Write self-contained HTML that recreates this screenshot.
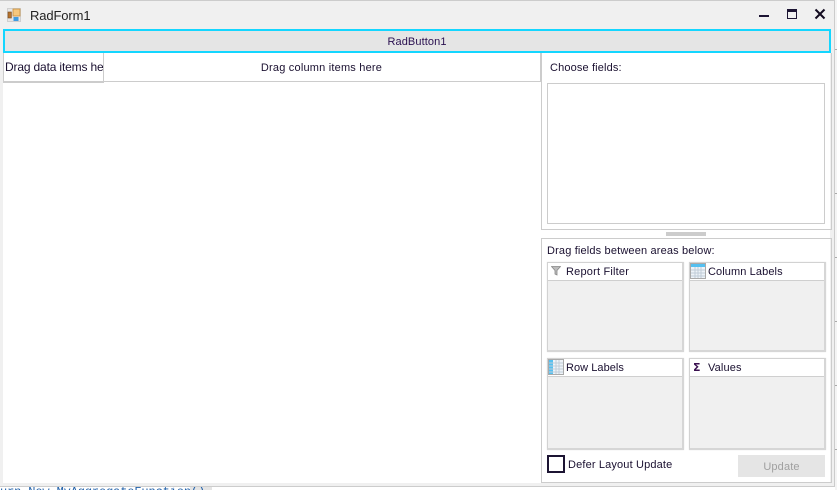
<!DOCTYPE html>
<html><head><meta charset="utf-8"><style>
html,body{margin:0;padding:0;width:837px;height:490px;overflow:hidden;background:#fff}
body{position:relative;font-family:"Liberation Sans",sans-serif;font-size:12px;color:#1a1030}
.a{position:absolute;box-sizing:border-box}
.t{position:absolute;white-space:nowrap;line-height:14px;letter-spacing:.14px}
.g{position:absolute;box-sizing:border-box;width:137px;background:#f0f0f0;border:1px solid #d2d2d2;border-right:2px solid #d6d6d6;border-bottom:2px solid #d6d6d6;box-shadow:0 0 1px #e0e0e0}
.g .h{position:absolute;left:0;top:0;right:0;height:17px;background:#fff;border-bottom:1px solid #cfcfcf}
</style></head><body>
<div class="a" style="left:0;top:0;width:835px;height:487px;background:#f0f0f0;border-top:1px solid #ccc;border-right:1px solid #ccc;border-bottom:1px solid #ccc"></div>
<div class="a" style="left:3px;top:53px;width:827px;height:430px;background:#fff"></div>
<div class="a" style="left:835px;top:0;width:2px;height:490px;background:#f4f4f4"></div>
<div class="a" style="left:835px;top:49px;width:2px;height:1px;background:#aaa"></div>
<div class="a" style="left:835px;top:193px;width:2px;height:1px;background:#aaa"></div>
<div class="a" style="left:835px;top:257px;width:2px;height:1px;background:#aaa"></div>
<div class="a" style="left:835px;top:321px;width:2px;height:1px;background:#aaa"></div>
<div class="a" style="left:835px;top:385px;width:2px;height:1px;background:#aaa"></div>
<div class="a" style="left:835px;top:449px;width:2px;height:1px;background:#aaa"></div>

<!-- title bar -->
<svg class="a" style="left:7px;top:8px" width="15" height="15" viewBox="0 0 15 15">
<rect width="14" height="14" fill="#cfcfcf"/><rect x="1" y="1" width="12" height="12" fill="#e6e6e6"/><rect x="6" y="1" width="7" height="7" fill="#f5c77e" stroke="#c98f3f" stroke-width=".8"/><rect x="1" y="4" width="3.4" height="6" fill="#b5722d" stroke="#7a4a1c" stroke-width=".6"/><rect x="6.5" y="9" width="5" height="4" fill="#3f9be0"/></svg>
<div class="t" style="left:30px;top:9px;font-size:13px;color:#222;letter-spacing:-.12px">RadForm1</div>
<div class="a" style="left:759px;top:15px;width:10px;height:2px;background:#1c1433"></div>
<div class="a" style="left:787px;top:9px;width:10px;height:10px;border:1px solid #1c1433;border-top:3px solid #1c1433"></div>
<svg class="a" style="left:814px;top:8px" width="12" height="12" viewBox="0 0 12 12"><path d="M1.5 1.5L10.5 10.5M10.5 1.5L1.5 10.5" stroke="#120a20" stroke-width="2"/></svg>

<!-- button -->
<div class="a" style="left:3px;top:29px;width:828px;height:24px;background:#e5e5e5;border:2px solid #14d6ff"></div>
<div class="t" style="left:3px;top:35px;width:828px;text-align:center;font-size:11px;color:#2a1050;letter-spacing:.1px">RadButton1</div>

<!-- header areas -->
<div class="a" style="left:103px;top:53px;width:438px;height:29px;border-right:1px solid #ccc;border-bottom:1px solid #ccc"></div>
<div class="t" style="left:103px;top:61px;width:437px;text-align:center;font-size:11px;letter-spacing:.2px">Drag column items here</div>
<div class="a" style="left:3px;top:53px;width:101px;height:30px;border-left:1px solid #ccc;border-right:1px solid #ccc;border-bottom:2px solid #ccc;overflow:hidden"><div class="t" style="left:1px;top:7px;font-size:12px;letter-spacing:-.16px">Drag data items here</div></div>

<!-- top panel -->
<div class="a" style="left:541px;top:53px;width:291px;height:177px;border:1px solid #ccc;border-top:0"></div>
<div class="t" style="left:550px;top:61px;font-size:11px">Choose fields:</div>
<div class="a" style="left:547px;top:83px;width:278px;height:141px;border:1px solid #ccc;background:#fff"></div>
<div class="a" style="left:666px;top:232px;width:40px;height:4px;background:#ccc"></div>

<!-- lower panel -->
<div class="a" style="left:541px;top:238px;width:291px;height:245px;border:1px solid #ccc"></div>
<div class="t" style="left:547px;top:244px;font-size:11px;letter-spacing:.16px">Drag fields between areas below:</div>

<div class="g" style="left:547px;top:262px;height:90px"><div class="h"></div></div>
<div class="g" style="left:689px;top:262px;height:90px"><div class="h"></div></div>
<div class="g" style="left:547px;top:358px;height:92px"><div class="h"></div></div>
<div class="g" style="left:689px;top:358px;height:92px"><div class="h"></div></div>

<svg class="a" style="left:551px;top:266px" width="10" height="10" viewBox="0 0 10 10"><path d="M.5 .5H9.5L6 4.5V9L4 8V4.5Z" fill="#bbb" stroke="#888" stroke-width=".8"/></svg>
<div class="t" style="left:566px;top:265px;font-size:11px;letter-spacing:.2px">Report Filter</div>

<svg class="a" style="left:690px;top:263px" width="16" height="16" viewBox="0 0 16 16"><rect x=".5" y=".5" width="15" height="15" fill="#eef3f8" stroke="#aaa"/><rect x="1" y="1" width="14" height="3" fill="#55c0f0"/><path d="M1 7H15M1 10H15M1 13H15M5 4V15M8 4V15M11 4V15" stroke="#c0ccd8" stroke-width="1"/></svg>
<div class="t" style="left:708px;top:265px;font-size:11px;letter-spacing:.1px">Column Labels</div>

<svg class="a" style="left:548px;top:359px" width="16" height="16" viewBox="0 0 16 16"><rect x=".5" y=".5" width="15" height="15" fill="#eef3f8" stroke="#aaa"/><rect x="1" y="1" width="4" height="14" fill="#55c0f0"/><path d="M1 4H15M1 7H15M1 10H15M1 13H15M8 1V15M11 1V15" stroke="#c0ccd8" stroke-width="1"/></svg>
<div class="t" style="left:566px;top:361px;font-size:11px;letter-spacing:.05px">Row Labels</div>

<div class="t" style="left:693px;top:361px;font-size:11px;font-weight:bold;color:#3a1050;font-family:'DejaVu Sans',sans-serif">Σ</div>
<div class="t" style="left:708px;top:361px;font-size:11px">Values</div>

<!-- footer -->
<div class="a" style="left:547px;top:455px;width:18px;height:18px;border:2px solid #1c1433;background:#fff"></div>
<div class="t" style="left:568px;top:458px;font-size:11px;letter-spacing:.15px">Defer Layout Update</div>
<div class="a" style="left:738px;top:455px;width:87px;height:22px;background:#e5e5e5"></div>
<div class="t" style="left:738px;top:460px;width:87px;text-align:center;font-size:11px;color:#a0a0a0">Update</div>

<!-- code strip -->
<div class="a" style="left:190px;top:487px;width:22px;height:3px;background:#e4e4e4"></div>
<div class="a" style="left:0;top:487px;width:212px;height:3px;overflow:hidden"><div class="t" style="left:0;top:-2px;font-family:'Liberation Mono',monospace;font-size:12px;color:#1f5fa8;white-space:pre;letter-spacing:-.13px">urn New MyAggregateFunction()</div></div>
</body></html>
